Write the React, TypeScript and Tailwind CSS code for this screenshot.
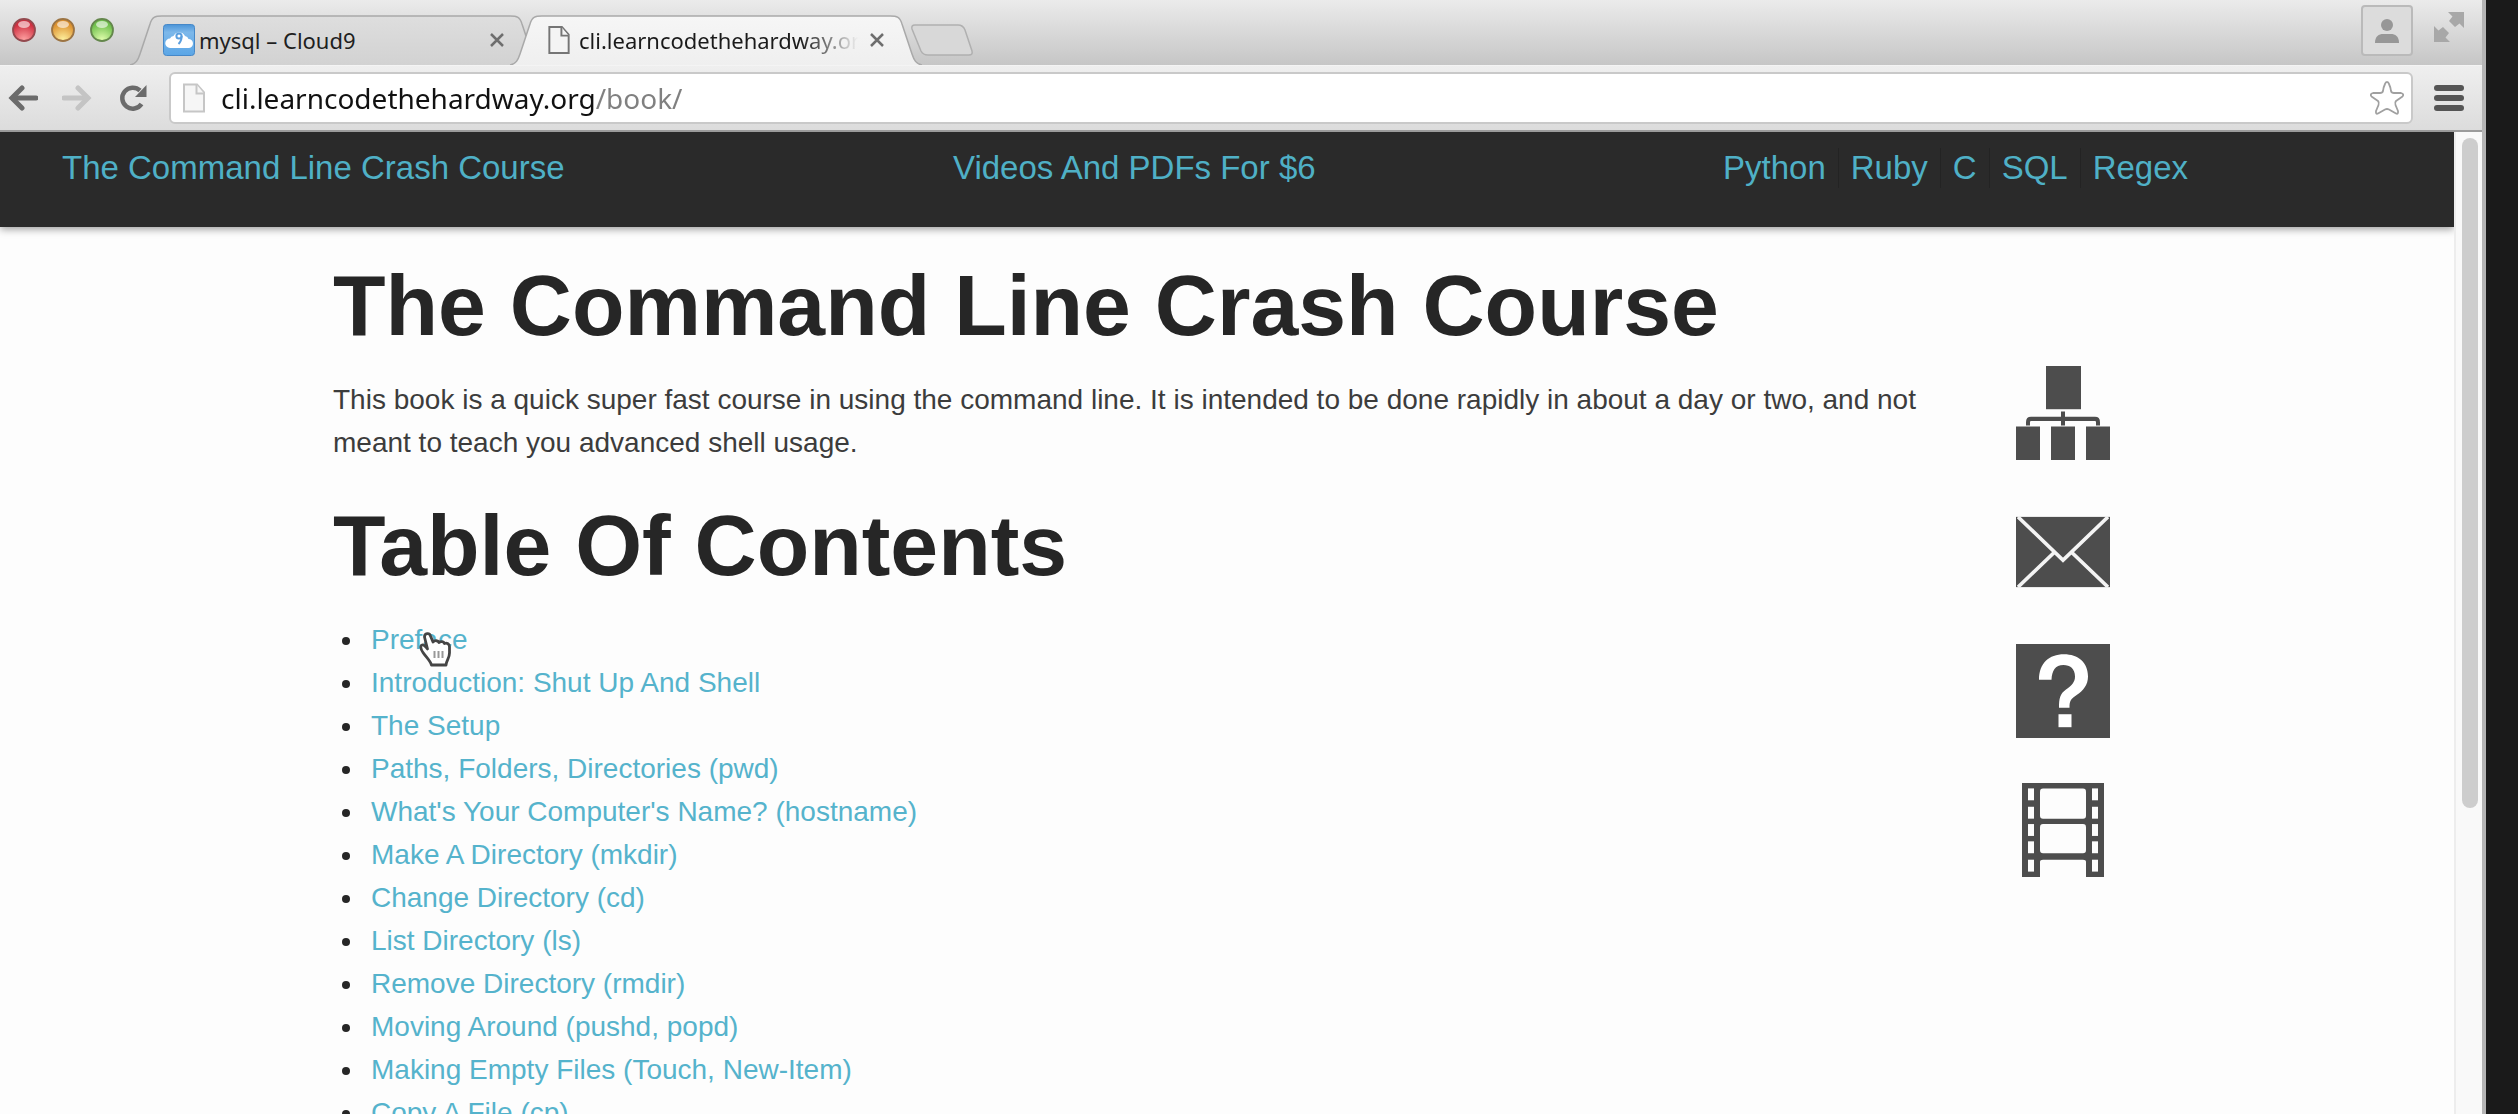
import React, { ReactNode, SVGProps } from "react";

const chapters = [
  "Preface",
  "Introduction: Shut Up And Shell",
  "The Setup",
  "Paths, Folders, Directories (pwd)",
  "What's Your Computer's Name? (hostname)",
  "Make A Directory (mkdir)",
  "Change Directory (cd)",
  "List Directory (ls)",
  "Remove Directory (rmdir)",
  "Moving Around (pushd, popd)",
  "Making Empty Files (Touch, New-Item)",
  "Copy A File (cp)",
];

const books = ["Python", "Ruby", "C", "SQL", "Regex"];

function FileIcon(props: SVGProps<SVGSVGElement>) {
  return (
    <svg viewBox="0 0 22 29" fill="none" strokeWidth="2" aria-hidden="true" {...props}>
      <path d="M1 1h13l7 8v19H1z" />
      <path d="M13.500 1v9H21" />
    </svg>
  );
}

function CloudIcon() {
  return (
    <svg viewBox="0 0 32 32" className="h-8 w-8" aria-hidden="true">
      <defs>
        <linearGradient id="cloud-bg" x1="0" y1="0" x2="0" y2="1">
          <stop offset="0" stopColor="#4a94d8" />
          <stop offset="0.250" stopColor="#7db8ea" />
          <stop offset="1" stopColor="#5ba6e6" />
        </linearGradient>
      </defs>
      <rect x="0.500" y="0.500" width="31" height="31" rx="3" fill="url(#cloud-bg)" stroke="#4688c8" />
      <path d="M7 24A4.500 4.500 0 0 1 7 14.500A4 4 0 0 1 10.500 12A6.500 6.500 0 0 1 22 12A4 4 0 0 1 25.500 15A4.500 4.500 0 0 1 25.500 24Z" fill="#fff" />
      <circle cx="16" cy="12" r="2.600" fill="none" stroke="#5b9fdf" strokeWidth="2" />
      <path d="M18.600 12c0 4-1 6-3.100 8" fill="none" stroke="#5b9fdf" strokeWidth="2" />
    </svg>
  );
}

type LightProps = { id: string; label: string; rim: string; dark: string; glow: string };

function Light({ id, label, rim, dark, glow }: LightProps) {
  return (
    <button type="button" aria-label={label}>
      <svg viewBox="0 0 24 24" className="h-6 w-6" aria-hidden="true">
        <defs>
          <radialGradient id={id} cx="0.5" cy="0.95" r="0.75">
            <stop offset="0" stopColor={glow} />
            <stop offset="1" stopColor={dark} />
          </radialGradient>
        </defs>
        <circle cx="12" cy="12" r="11" fill={"url(#" + id + ")"} stroke={rim} strokeWidth="1.800" />
        <ellipse cx="12" cy="6.500" rx="6" ry="3.500" fill="#fff" opacity="0.600" />
      </svg>
    </button>
  );
}

function Tab({ title, icon, active }: { title: string; icon: ReactNode; active?: boolean }) {
  return (
    <div role="tab" aria-selected={!!active} className={"relative flex h-[50px] w-[412px] shrink-0 items-center pl-8 " + (active ? "z-10 -ml-8" : "")}>
      <svg viewBox="0 0 412 50" className="absolute inset-0 h-full w-full" aria-hidden="true">
        <defs>
          <linearGradient id={active ? "tab-on" : "tab-off"} x1="0" y1="0" x2="0" y2="1">
            <stop offset="0" stopColor={active ? "#f6f6f6" : "#dedede"} />
            <stop offset="1" stopColor={active ? "#efefef" : "#d2d2d2"} />
          </linearGradient>
        </defs>
        <path
          d="M0 50C6 49 8 45 10 39L20 9C22 2 25 1 32 1H380C387 1 390 2 392 9L402 39C404 45 406 49 412 50"
          fill={active ? "url(#tab-on)" : "url(#tab-off)"}
          stroke="#a9a9a9"
          strokeWidth="1.500"
        />
      </svg>
      <span className="relative flex w-[34px] justify-center">{icon}</span>
      <span
        className={
          "relative ml-[3px] w-[282px] overflow-hidden whitespace-nowrap text-[22px] leading-8 " +
          (active ? "bg-linear-to-r from-[#1a1a1a] from-78% to-[#f2f2f2] to-99% bg-clip-text text-transparent" : "text-[#1f1f1f]")
        }
      >
        {title}
      </span>
      <button type="button" aria-label={"Close " + title} className="relative ml-1.5 flex h-5 w-5 items-center justify-center">
        <svg viewBox="0 0 14 14" className="h-[14px] w-[14px]" stroke="#6e6e6e" strokeWidth="2.500" aria-hidden="true">
          <path d="M1 1l12 12M13 1L1 13" />
        </svg>
      </button>
    </div>
  );
}

function TabStrip() {
  return (
    <div className="flex h-[65px] shrink-0 items-end bg-linear-to-b from-[#ebebeb] to-[#c6c6c6]">
      <div className="flex gap-[15px] self-start pt-[18px] pl-3">
        <Light id="light-close" label="Close window" rim="#93494e" dark="#cf2f40" glow="#ffa3a3" />
        <Light id="light-min" label="Minimize window" rim="#9c7443" dark="#dd9230" glow="#fff2a0" />
        <Light id="light-zoom" label="Zoom window" rim="#64874c" dark="#6fbf4c" glow="#e2ffae" />
      </div>
      <div role="tablist" className="ml-4 flex">
        <Tab title="mysql – Cloud9" icon={<CloudIcon />} />
        <Tab title="cli.learncodethehardway.org/book/" active icon={<FileIcon className="h-7 w-[22px] fill-[#f4f4f4] stroke-[#757575]" />} />
      </div>
      <button type="button" aria-label="New tab" className="-ml-3 mb-[9px]">
        <svg viewBox="0 0 64 32" className="h-8 w-16" aria-hidden="true">
          <path d="M5 1H48Q53 1 55 6L62 27Q63 31 59 31H18Q13 31 11 27L2 5Q1 1 5 1Z" fill="#d8d8d8" stroke="#b0b0b0" strokeWidth="1.500" />
        </svg>
      </button>
      <button type="button" aria-label="Profile" className="mr-[21px] ml-auto mb-[9px] flex h-[51px] w-[52px] items-center justify-center rounded-sm border-2 border-[#bababa] bg-[#dcdcdc]">
        <svg viewBox="0 0 26 24" className="h-6 w-[26px]" fill="#979797" aria-hidden="true">
          <circle cx="13" cy="6" r="6" />
          <path d="M1 24C1 17 5 15 9 15h8c4 0 8 2 8 9z" />
        </svg>
      </button>
      <button type="button" aria-label="Full screen" className="mr-[18px] mb-[23px]">
        <svg viewBox="0 0 30 30" className="h-[30px] w-[30px]" fill="#a8a8a8" aria-hidden="true">
          <path d="M14 0H30V16L25.500 11.500L21 15L15 9L18.500 4.500Z" />
          <path d="M16 30H0V14L4.500 18.500L9 15L15 21L11.500 25.500Z" />
        </svg>
      </button>
    </div>
  );
}

function Arrow({ className }: { className: string }) {
  return (
    <svg viewBox="0 0 30 26" className={"h-[26px] w-[30px] " + className} fill="none" strokeWidth="5" strokeLinecap="round" aria-hidden="true">
      <path d="M5 13H28" />
      <path d="M14 3L4 13L14 23" />
    </svg>
  );
}

function Toolbar() {
  return (
    <div className="flex h-[67px] shrink-0 items-center border-t border-b-2 border-t-[#f4f4f4] border-b-[#9b9b9b] bg-linear-to-b from-[#efefef] to-[#dcdcdc] pr-[18px] pl-2">
      <button type="button" aria-label="Back">
        <Arrow className="stroke-[#6b6b6b]" />
      </button>
      <button type="button" aria-label="Forward" className="ml-6">
        <Arrow className="rotate-180 stroke-[#c4c4c4]" />
      </button>
      <button type="button" aria-label="Reload" className="ml-[27px]">
        <svg viewBox="0 0 28 28" className="h-7 w-7" aria-hidden="true">
          <path d="M22.500 20A10.500 10.500 0 1 1 21 6.500" fill="none" stroke="#6b6b6b" strokeWidth="4.500" />
          <path d="M27.500 1V13H16Z" fill="#6b6b6b" />
        </svg>
      </button>
      <div className="ml-[22px] flex h-[52px] grow items-center rounded-md border-2 border-[#c9c9c9] bg-white pr-1.5 pl-3">
        <FileIcon className="h-[30px] w-[22px] shrink-0 fill-[#f6f6f6] stroke-[#c6c6c6]" />
        <input
          type="text"
          aria-label="Address"
          defaultValue="cli.learncodethehardway.org/book/"
          className="ml-4 min-w-0 grow bg-linear-to-r from-[#111111] from-[374px] to-[#808080] to-[374px] bg-clip-text text-[28px] leading-10 text-transparent outline-none"
        />
        <button type="button" aria-label="Bookmark this page" className="shrink-0">
          <svg viewBox="0 0 36 36" className="h-9 w-9" fill="#fff" stroke="#a0a0a0" strokeWidth="1.800" strokeLinejoin="round" aria-hidden="true">
            <path d="M18 2Q19.500 2 20 4Q21.500 7 22 11Q22.500 13 25 13H32Q35.500 14 33.500 16.500L27 21Q25.500 22.500 26.500 25L29 31Q29.500 34.500 27 33.500L20 29.500Q18 28.500 16 29.500L9 33.500Q6.500 34.500 7 31L9.500 25Q10.500 22.500 9 21L2.500 16.500Q.5 14 4 13H11Q13.500 13 14 11Q14.500 7 16 4Q16.500 2 18 2Z" />
          </svg>
        </button>
      </div>
      <button type="button" aria-label="Menu" className="ml-[21px]">
        <svg viewBox="0 0 30 26" className="h-[26px] w-[30px]" fill="#555" aria-hidden="true">
          <rect width="30" height="6" rx="3" />
          <rect y="10" width="30" height="6" rx="3" />
          <rect y="20" width="30" height="6" rx="3" />
        </svg>
      </button>
    </div>
  );
}

function SiteHeader() {
  return (
    <header className="grid h-[95px] grid-cols-[891fr_770fr_731fr] bg-[#2a2a2a] pt-4 pl-[62px] text-[33px] leading-10 text-[#4fb0c6] shadow-[0_2px_8px_rgba(0,0,0,0.4)]">
      <div>
        <a href="#home">The Command Line Crash Course</a>
      </div>
      <div>
        <a href="#videos">Videos And PDFs For $6</a>
      </div>
      <nav aria-label="Books" className="flex h-10 divide-x divide-[#232323]">
        {books.map((name) => (
          <a key={name} href={"#" + name.toLowerCase()} className="px-3 first:pl-0">
            {name}
          </a>
        ))}
      </nav>
    </header>
  );
}

function SideLink({ label, children }: { label: string; children: ReactNode }) {
  return (
    <a href={"#" + label.toLowerCase()} aria-label={label}>
      <svg viewBox="0 0 94 87" preserveAspectRatio="none" className="h-[94px] w-[94px]" fill="#4d4d4d" aria-hidden="true">
        {children}
      </svg>
    </a>
  );
}

function SideLinks() {
  return (
    <nav aria-label="Resources" className="ml-auto flex shrink-0 flex-col gap-[45px] pt-[104px]">
      <SideLink label="Contents">
        <rect x="30" y="0" width="35" height="40" />
        <rect x="0" y="56" width="24" height="31" />
        <rect x="35" y="56" width="24" height="31" />
        <rect x="70" y="56" width="24" height="31" />
        <path d="M12 55V52Q12 49 15 49H79Q82 49 82 52V55M47 42V55" fill="none" stroke="#4d4d4d" strokeWidth="4" />
      </SideLink>
      <SideLink label="Email">
        <rect x="0" y="11" width="94" height="65" />
        <path d="M2 11L47 51L92 11M2 76L38 44M92 76L56 44" fill="none" stroke="#f4f4f4" strokeWidth="3.500" />
      </SideLink>
      <SideLink label="Help">
        <rect width="94" height="87" />
        <path
          d="M23 33C23 18 33 9.500 48 9.500C62 9.500 72 17 72 30C72 38 67 43 61 47C55 51 53.500 52 53.500 59H43C43 50 44 46 50 42C56 38 59 35 59 30C59 23 54 19.500 47.500 19.500C39 19.500 36 25 35.500 33Z"
          fill="#fff"
        />
        <rect x="42.500" y="65" width="13" height="12" fill="#fff" />
      </SideLink>
      <SideLink label="Videos">
        <rect x="6" width="82" height="87" />
        <g fill="#fdfdfd">
          <rect x="24" y="5" width="46" height="28" rx="3" />
          <rect x="24" y="38" width="46" height="27" rx="3" />
          <path d="M24 88V73Q24 71 27 71H67Q70 71 70 73V88Z" />
          {[5, 22, 38, 54, 71].map((y) => (
            <g key={y}>
              <rect x="12" y={y} width="6" height="11" />
              <rect x="76" y={y} width="6" height="11" />
            </g>
          ))}
        </g>
      </SideLink>
    </nav>
  );
}

function HandCursor() {
  return (
    <svg viewBox="0 0 32 36" className="absolute top-3.5 left-[54px] h-9 w-8" aria-hidden="true">
      <path
        d="M5.500 5C5.500 1 10.500 0.500 11.500 4L14 10C16 8 19 8.500 20 10.500C22 9 24.500 9.500 25.500 11.500C28 10.500 30.500 12 30.500 15V21C30.500 26 27.500 28 27 33H12.500C11 28 7 25 4 20.500C1.500 17 1 13.500 3 13C5 12.500 7 15 8.500 17Z"
        fill="#fff"
        stroke="#454545"
        strokeWidth="2.800"
        strokeLinejoin="round"
      />
      <path d="M15.500 19v7M19.500 19v7M23.500 19v7" stroke="#999" strokeWidth="2" />
    </svg>
  );
}

export default function App() {
  return (
    <div className="h-screen overflow-hidden bg-[#1a1a1a] pr-8 font-['Noto_Sans',sans-serif]">
      <div className="flex h-full flex-col border-r-4 border-[#b5b5b5] bg-[#fdfdfd]">
        <TabStrip />
        <Toolbar />
        <div className="flex min-h-0 grow">
          <div className="min-w-0 grow overflow-hidden font-['Liberation_Sans',Arial,sans-serif]">
            <SiteHeader />
            <div className="flex pt-[35px] pr-[344px] pl-[333px] text-[#262626]">
              <main className="max-w-[1600px] grow text-[28px] leading-[43px]">
                <h1 className="text-[86px] leading-none font-bold">The Command Line Crash Course</h1>
                <p className="mt-[30px] text-[#3c3c3c]">
                  This book is a quick super fast course in using the command line. It is intended to be done rapidly in about a day or two, and not
                  meant to teach you advanced shell usage.
                </p>
                <h1 className="mt-[38px] text-[86px] leading-none font-bold">Table Of Contents</h1>
                <ul className="mt-[30px] list-disc pl-8">
                  {chapters.map((title, i) => (
                    <li key={title} className="relative pl-1.5">
                      <a href={"#chapter-" + i} className="text-[#55b3cc]">
                        {title}
                      </a>
                      {i === 0 && <HandCursor />}
                    </li>
                  ))}
                </ul>
              </main>
              <SideLinks />
            </div>
          </div>
          <div className="w-7 shrink-0 border-l-2 border-[#ededed] bg-[#f9f9f9] pt-1.5 pl-1.5">
            <div className="h-[670px] w-4 rounded-full bg-[#cdcdcd]" />
          </div>
        </div>
      </div>
    </div>
  );
}
